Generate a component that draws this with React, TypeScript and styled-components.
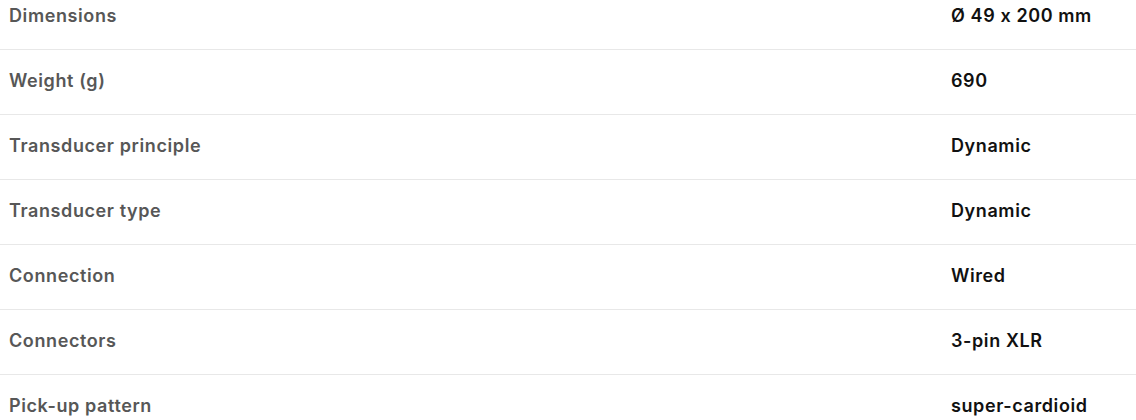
import React from "react";
import styled, { createGlobalStyle } from "styled-components";

const GlobalStyle = createGlobalStyle`
  html, body {
    margin: 0;
    padding: 0;
    background: #ffffff;
    overflow: hidden;
  }
  body {
    font-family: Inter, "Open Sans", "Liberation Sans", sans-serif;
  }
`;

const SpecTable = styled.dl`
  margin: -15px 0 0 0;
  padding: 0;
  width: 100%;
`;

const SpecRow = styled.div`
  display: grid;
  grid-template-columns: 1fr 177px;
  align-items: center;
  box-sizing: border-box;
  height: 65px;
  padding: 0 8px 4px 9px;
  border-bottom: 1px solid #e8e8e8;
`;

const Label = styled.dt`
  margin: 0;
  font-size: 18px;
  font-weight: 600;
  color: #575757;
  letter-spacing: 0.6px;
`;

const Value = styled.dd`
  margin: 0;
  font-size: 18px;
  font-weight: 600;
  color: #111111;
  letter-spacing: 0.6px;
`;

const specs = [
  { label: "Dimensions", value: "Ø 49 x 200 mm" },
  { label: "Weight (g)", value: "690" },
  { label: "Transducer principle", value: "Dynamic" },
  { label: "Transducer type", value: "Dynamic" },
  { label: "Connection", value: "Wired" },
  { label: "Connectors", value: "3-pin XLR" },
  { label: "Pick-up pattern", value: "super-cardioid" },
];

const App = () => {
  return (
    <>
      <GlobalStyle />
      <SpecTable>
        {specs.map((item) => (
          <SpecRow key={item.label}>
            <Label>{item.label}</Label>
            <Value>{item.value}</Value>
          </SpecRow>
        ))}
      </SpecTable>
    </>
  );
};

export default App;
